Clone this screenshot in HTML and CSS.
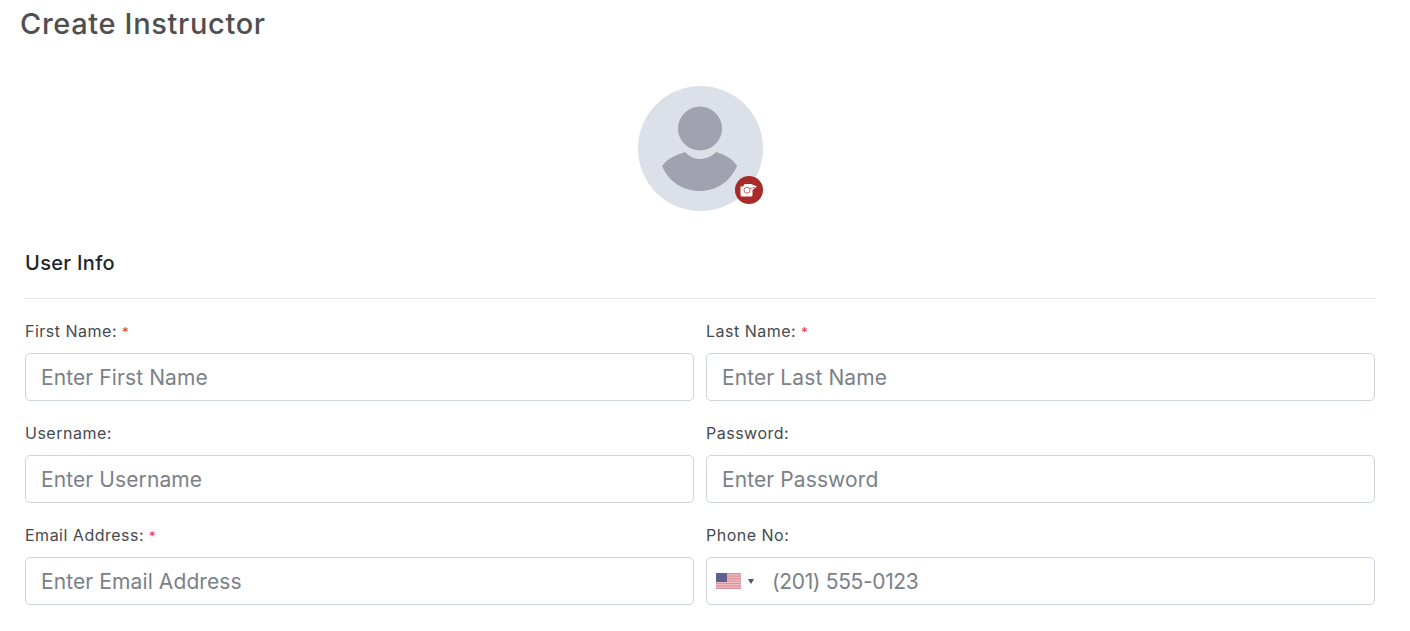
FILE: index.html
```html
<!DOCTYPE html>
<html lang="en">
<head>
  <meta charset="UTF-8">
  <title>Create Instructor</title>
  <link rel="stylesheet" href="styles.css">
</head>
<body>
  <div class="page">
    <h1 class="page-title">Create Instructor</h1>

    <div class="avatar-row">
      <div class="avatar">
        <svg class="avatar-img" viewBox="0 0 125 125" width="125" height="125">
          <circle cx="62" cy="42.5" r="22" fill="#a0a3af"/>
          <path d="M24 80 C30 72 38 69 47 66 C52 71 57 73 62 73 C67 73 73 71 78 66 C87 69 94 72 99 80 C92 96 78 105 62 105 C45 105 31 96 24 80 Z" fill="#a0a3af"/>
        </svg>
        <span class="avatar-badge">
          <svg viewBox="0 0 17 14" width="17" height="14">
            <path d="M0.5 3.5 L3 3.5 L4.5 1 L11 1 L17 3.5 L12.5 7 L12.5 12 Q12.5 13.5 11 13.5 L2 13.5 Q0.5 13.5 0.5 12 Z" fill="#fff"/>
            <circle cx="7" cy="7.2" r="3" fill="none" stroke="#b9504f" stroke-width=".9"/>
            <path d="M9.5 5.5 L15 4.2" stroke="#b9504f" stroke-width=".8"/>
          </svg>
        </span>
      </div>
    </div>

    <section class="user-info">
      <h2 class="section-title">User Info</h2>
      <div class="form-grid">
        <div class="field">
          <label>First Name: <span class="req">*</span></label>
          <input type="text" placeholder="Enter First Name">
        </div>
        <div class="field">
          <label>Last Name: <span class="req">*</span></label>
          <input type="text" placeholder="Enter Last Name">
        </div>
        <div class="field">
          <label>Username:</label>
          <input type="text" placeholder="Enter Username">
        </div>
        <div class="field">
          <label>Password:</label>
          <input type="password" placeholder="Enter Password">
        </div>
        <div class="field">
          <label>Email Address: <span class="req">*</span></label>
          <input type="text" placeholder="Enter Email Address">
        </div>
        <div class="field">
          <label>Phone No:</label>
          <div class="phone">
            <svg class="flag" viewBox="0 0 25 16" width="25" height="16">
              <rect width="25" height="16" fill="#ecbcc0"/>
              <path d="M0 0H25V1.2H0ZM0 2.5H25V3.7H0ZM0 5H25V6.2H0ZM0 7.4H25V8.6H0ZM0 9.9H25V11.1H0ZM0 12.3H25V13.5H0ZM0 14.8H25V16H0Z" fill="#dc929a"/>
              <rect width="11" height="9" fill="#5f608f"/>
            </svg>
            <span class="caret"></span>
            <input type="tel" placeholder="(201) 555-0123">
          </div>
        </div>
      </div>
    </section>
  </div>
</body>
</html>
```

FILE: styles.css
```css
body { margin: 0; background: #fff; font-family: Inter, "Noto Sans", sans-serif; color: #212529; overflow: hidden; }
.page { width: 1400px; }
.page-title { margin: 0; padding: 7px 0 0 20px; font-size: 29px; line-height: 33px; font-weight: 500; letter-spacing: .65px; color: #4f4f4f; }
.avatar-row { display: flex; justify-content: center; margin-top: 46px; }
.avatar { position: relative; width: 125px; height: 125px; border-radius: 50%; background: #dce0e9; }
.avatar-img { display: block; }
.avatar-badge { position: absolute; right: 0; bottom: 7px; width: 28px; height: 28px; border-radius: 50%; background: #a82a2a; display: flex; align-items: center; justify-content: center; }
.user-info { padding: 0 25px; }
.section-title { margin: 40px 0 0; padding-bottom: 22px; font-size: 20px; line-height: 25px; font-weight: 500; letter-spacing: .33px; border-bottom: 1px solid #e3e5e8; }
.form-grid { display: grid; grid-template-columns: 1fr 1fr; column-gap: 12px; row-gap: 22px; padding-top: 22px; }
.field label { display: block; font-size: 16px; line-height: 20px; letter-spacing: .5px; color: #454a4f; margin-bottom: 12px; }
.req { color: #e53535; font-size: 13px; line-height: 0; }
input { display: block; width: 100%; box-sizing: border-box; height: 48px; padding: 0 15px; border: 1px solid #ced4da; border-radius: 5px; font-family: inherit; font-size: 21px; letter-spacing: .1px; color: #495057; outline: none; }
input::placeholder { color: #7a8188; }
.phone { display: flex; align-items: center; height: 48px; box-sizing: border-box; border: 1px solid #ced4da; border-radius: 5px; padding-left: 9px; }
.flag { flex: none; }
.caret { flex: none; margin-left: 7px; border-left: 3px solid transparent; border-right: 3px solid transparent; border-top: 5px solid #555; }
.phone input { border: 0; height: 46px; padding: 0 0 0 18px; flex: 1; width: auto; min-width: 0; background: transparent; letter-spacing: -.35px; }
```
